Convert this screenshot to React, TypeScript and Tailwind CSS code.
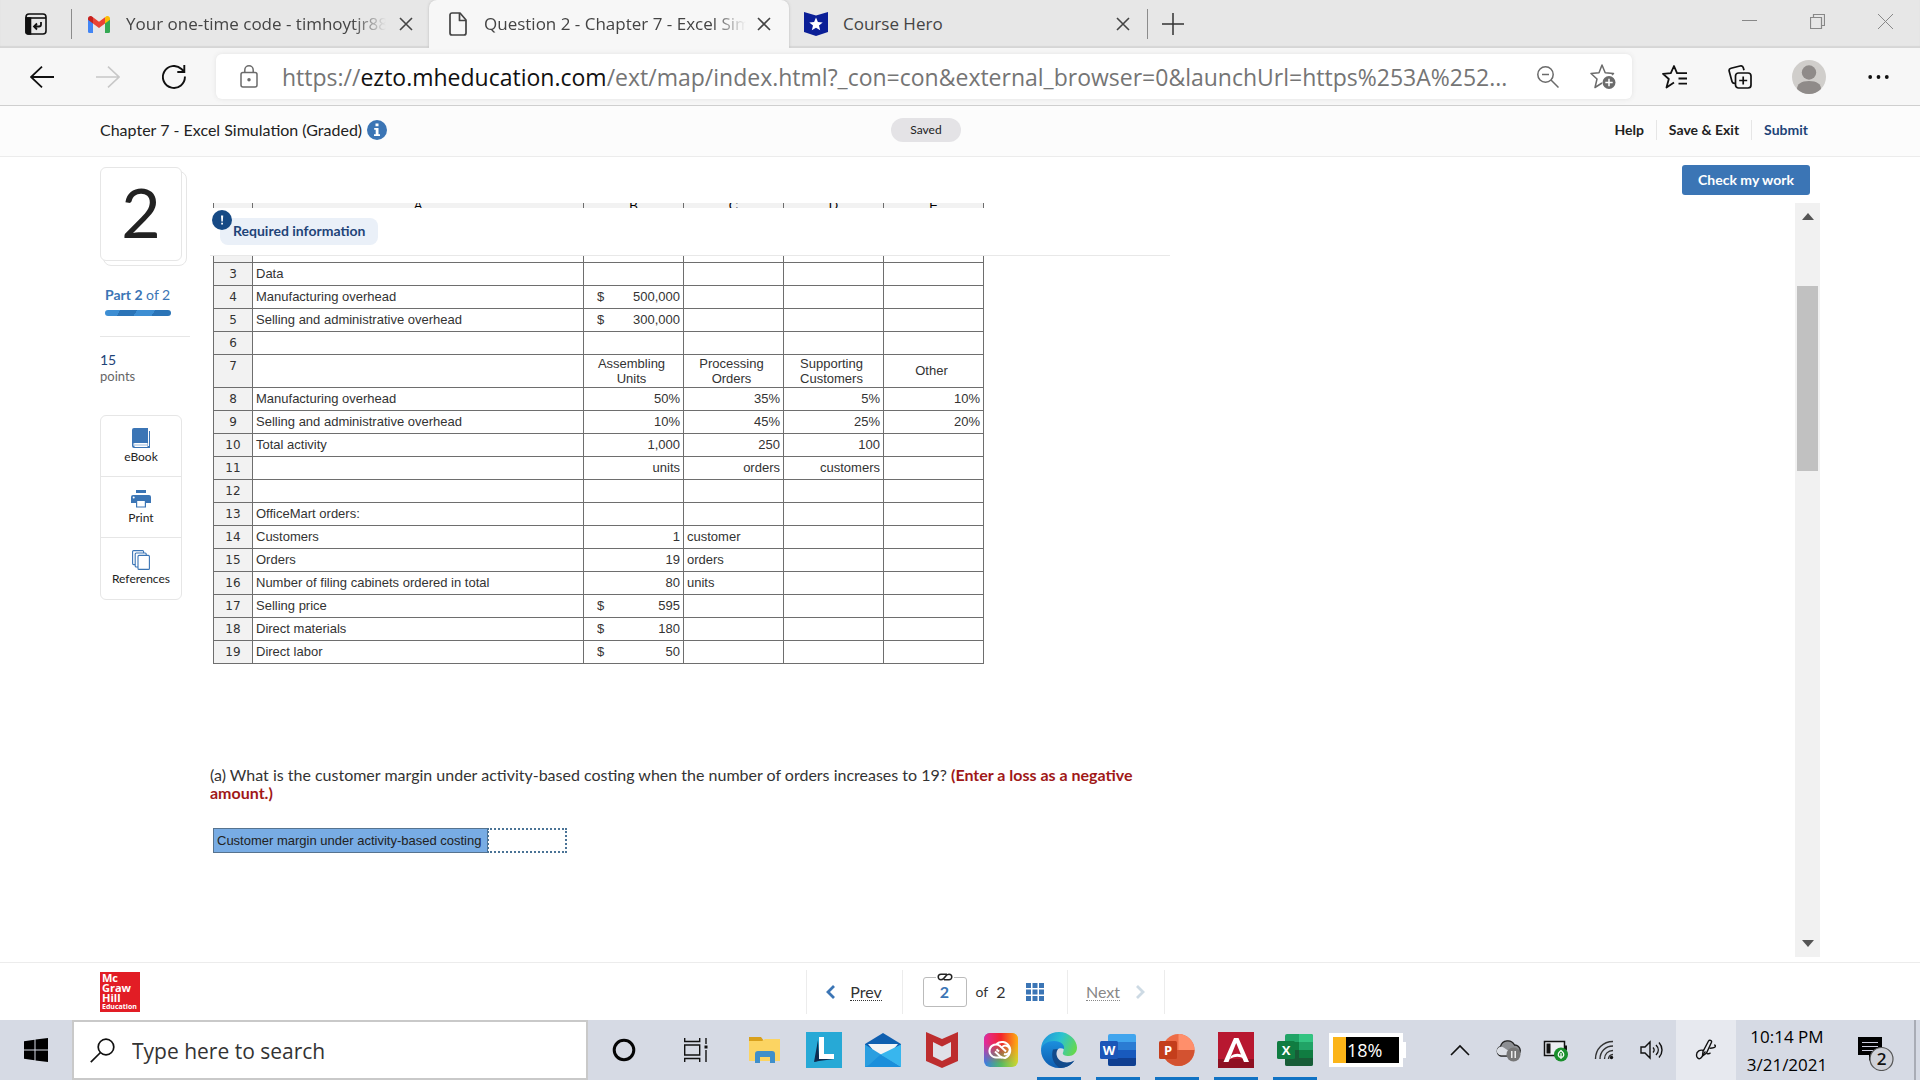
import React from 'react';

type Cell = string;
type Row = { n: number; cells: Cell[]; header?: boolean };

const rows: Row[] = [
  { n: 1, cells: ['', '', '', '', ''] },
  { n: 2, cells: ['', '', '', '', ''] },
  { n: 3, cells: ['Data', '', '', '', ''] },
  { n: 4, cells: ['Manufacturing overhead', '$500,000', '', '', ''] },
  { n: 5, cells: ['Selling and administrative overhead', '$300,000', '', '', ''] },
  { n: 6, cells: ['', '', '', '', ''] },
  { n: 7, cells: ['', 'Assembling Units', 'Processing Orders', 'Supporting Customers', 'Other'], header: true },
  { n: 8, cells: ['Manufacturing overhead', '50%', '35%', '5%', '10%'] },
  { n: 9, cells: ['Selling and administrative overhead', '10%', '45%', '25%', '20%'] },
  { n: 10, cells: ['Total activity', '1,000', '250', '100', ''] },
  { n: 11, cells: ['', 'units', 'orders', 'customers', ''] },
  { n: 12, cells: ['', '', '', '', ''] },
  { n: 13, cells: ['OfficeMart orders:', '', '', '', ''] },
  { n: 14, cells: ['Customers', '1', '<customer', '', ''] },
  { n: 15, cells: ['Orders', '19', '<orders', '', ''] },
  { n: 16, cells: ['Number of filing cabinets ordered in total', '80', '<units', '', ''] },
  { n: 17, cells: ['Selling price', '$595', '', '', ''] },
  { n: 18, cells: ['Direct materials', '$180', '', '', ''] },
  { n: 19, cells: ['Direct labor', '$50', '', '', ''] },
];

const ui = "font-['Open_Sans','Noto_Sans',sans-serif]";
const body = "font-['Lato','Open_Sans',sans-serif]";

function Close({ className = 'size-[14px]' }: { className?: string }) {
  return (
    <svg viewBox="0 0 14 14" className={className} fill="none" stroke="currentColor" strokeWidth="1.6">
      <path d="M1 1l12 12M13 1L1 13" />
    </svg>
  );
}

function TabStrip() {
  return (
    <div className={`flex h-12 shrink-0 items-stretch bg-[#e7e7e7] text-[17px] text-[#444] shadow-[inset_0_-2px_1px_#d6d6d6] ${ui}`}>
      <div className="flex w-[72px] items-center border-r-0 pl-[25px]">
        <button aria-label="Tab actions">
          <svg viewBox="0 0 22 22" className="size-[22px]" fill="none" stroke="#111" strokeWidth="1.6">
            <rect x="1" y="1" width="20" height="20" rx="3" />
            <path d="M1 5h20" />
            <path d="M1 5h4.500v16H3a2 2 0 0 1-2-2z" fill="#111" />
            <path d="M16 9v2.500a2 2 0 0 1-2 2H9.500M12 10.500l-3 3 3 3" strokeWidth="1.800" />
          </svg>
        </button>
      </div>
      <div className="flex w-[357px] items-center">
        <span className="-ml-px h-[30px] w-px bg-[#8c8c8c]" />
        <svg viewBox="0 0 22 17" className="ml-[16px] h-[17px] w-[22px] shrink-0">
          <path d="M0 2.500V15.500A1.500 1.500 0 0 0 1.500 17H5V6z" fill="#4285f4" />
          <path d="M22 2.500V15.500A1.500 1.500 0 0 1 20.500 17H17V6z" fill="#34a853" />
          <path d="M17 1.200V7.500l5-3.700V2.500C22 .4 19.700-.7 18 .5z" fill="#fbbc04" />
          <path d="M5 7.500V1.200l6 4.500 6-4.500v6.300L11 12z" fill="#ea4335" />
          <path d="M0 2.500v1.300l5 3.700V1.200L4 .5C2.300-.7 0 .4 0 2.500z" fill="#c5221f" />
        </svg>
        <span className="ml-4 w-[260px] overflow-hidden whitespace-nowrap [mask-image:linear-gradient(to_right,black_87%,transparent)]">
          Your one-time code - timhoytjr88
        </span>
        <button aria-label="Close tab" className="ml-[13px]"><Close /></button>
      </div>
      <div className="flex w-[360px] items-center rounded-t-lg bg-[#f7f7f7] shadow-[0_0_3px_#bbb] [clip-path:inset(0_-4px_0_-4px)]">
        <svg viewBox="0 0 18 24" className="ml-5 h-6 w-[18px] shrink-0" fill="none" stroke="#444" strokeWidth="1.700" strokeLinejoin="round">
          <path d="M3 1h8l6 7v13a2 2 0 0 1-2 2H3a2 2 0 0 1-2-2V3a2 2 0 0 1 2-2z" />
          <path d="M10.500 1v7.500H17" />
        </svg>
        <span className="ml-[17px] w-[262px] overflow-hidden whitespace-nowrap [mask-image:linear-gradient(to_right,black_87%,transparent)]">
          Question 2 - Chapter 7 - Excel Sim
        </span>
        <button aria-label="Close tab" className="ml-[11px]"><Close /></button>
      </div>
      <div className="flex w-[359px] items-center">
        <svg viewBox="0 0 24 24" className="ml-[15px] size-6 shrink-0">
          <path d="M0 0l12 3.500L24 0v20l-12 4-12-4z" fill="#0b1f97" />
          <path d="M12 5.500l1.900 4.500 4.800.4-3.700 3.100 1.200 4.700-4.200-2.500-4.200 2.500L9 13.500l-3.700-3.100 4.800-.4z" fill="#fff" />
        </svg>
        <span className="ml-[15px] flex-1">Course Hero</span>
        <button aria-label="Close tab" className="mr-[17px]"><Close /></button>
        <span className="h-[30px] w-px bg-[#8c8c8c]" />
      </div>
      <button aria-label="New tab" className="ml-[14px]">
        <svg viewBox="0 0 22 22" className="size-[22px]" stroke="#333" strokeWidth="1.500"><path d="M11 0v22M0 11h22" /></svg>
      </button>
      <div className="ml-auto flex items-start gap-[53px] pt-[14px] pr-[27px] text-[#888]">
        <button aria-label="Minimize">
          <svg viewBox="0 0 15 15" className="size-[15px]" stroke="currentColor"><path d="M0 6.500h15" /></svg>
        </button>
        <button aria-label="Restore">
          <svg viewBox="0 0 15 15" className="size-[15px]" fill="none" stroke="currentColor" strokeWidth="1.200"><path d="M.5 3.500h11v11H.5zM3.500 3.500v-3h11v11h-3" /></svg>
        </button>
        <button aria-label="Close window">
          <svg viewBox="0 0 15 15" className="size-[15px]" fill="none" stroke="currentColor"><path d="M0 0l15 15M15 0L0 15" /></svg>
        </button>
      </div>
    </div>
  );
}

function Toolbar() {
  return (
    <div className={`flex h-[58px] shrink-0 items-center border-b border-[#cfcfcf] bg-[#f7f7f7] pr-[31px] pl-[30px] ${ui}`}>
      <button aria-label="Back">
        <svg viewBox="0 0 24 22" className="h-[22px] w-6" fill="none" stroke="#111" strokeWidth="1.800"><path d="M24 11H1M12 .7L1 11l11 10.300" /></svg>
      </button>
      <button aria-label="Forward" className="ml-[42px]">
        <svg viewBox="0 0 24 22" className="h-[22px] w-6" fill="none" stroke="#c8c8c8" strokeWidth="1.600"><path d="M0 11h23M12 .7L23 11 12 21.300" /></svg>
      </button>
      <button aria-label="Refresh" className="ml-[42px]">
        <svg viewBox="0 0 24 24" className="size-6" fill="none" stroke="#111" strokeWidth="1.900"><path d="M22.900 11.500A11 11 0 1 1 19.500 4L22 6.600M22.300 0v7h-7" /></svg>
      </button>
      <div className="ml-[30px] flex h-[45px] flex-1 items-center rounded-md bg-white pr-4 pl-6 shadow-[0_0_5px_#e2e2e2]">
        <svg viewBox="0 0 18 23" className="h-[23px] w-[18px] shrink-0" fill="none" stroke="#6b6b6b" strokeWidth="1.500">
          <rect x="1" y="7.500" width="16" height="14.500" rx="2" />
          <path d="M4.800 7.500V5a4.200 4.200 0 0 1 8.400 0v2.500" />
          <circle cx="9" cy="14.700" r="1" fill="#6b6b6b" />
        </svg>
        <div role="textbox" aria-label="Address" className="ml-6 flex-1 whitespace-nowrap text-[23px] leading-8 text-[#757575]">
          https://<span className="text-[#111]">ezto.mheducation.com</span>/ext/map/index.html?_con=con&amp;external_browser=0&amp;launchUrl=https%253A%252...
        </div>
        <button aria-label="Zoom out">
          <svg viewBox="0 0 22 22" className="size-[22px]" fill="none" stroke="#6b6b6b" strokeWidth="1.500"><circle cx="8.500" cy="8.500" r="7.700" /><path d="M14 14l7.500 7.500M5 8.500h7" /></svg>
        </button>
        <button aria-label="Add to favorites" className="ml-[31px]">
          <svg viewBox="0 0 26 26" className="size-[26px]" fill="none" stroke="#6b6b6b" strokeWidth="1.500" strokeLinejoin="round">
            <path d="M12 19l-7 4.500 2-8.500L1 9.500l8-.7L12 1l3.200 7.800 8.300.7-1.500 1.500" />
            <circle cx="19" cy="18.500" r="6.500" fill="#6b6b6b" stroke="none" />
            <path d="M19 14.800v7.400M15.300 18.500h7.400" stroke="#fff" />
          </svg>
        </button>
      </div>
      <button aria-label="Favorites" className="ml-[30px]">
        <svg viewBox="0 0 26 24" className="h-6 w-[26px]" fill="none" stroke="#111" strokeWidth="1.800" strokeLinejoin="round">
          <path d="M12 17.500L4.500 22.500l2.300-8.500L1 8.800l7.800-.6L12 1l3 7.200h10M16.500 13.500H25M16.500 18.700H25" />
        </svg>
      </button>
      <button aria-label="Collections" className="ml-10">
        <svg viewBox="0 0 24 24" className="size-6" fill="none" stroke="#111" strokeWidth="1.700">
          <rect x="7.500" y="8" width="15.500" height="15" rx="3" />
          <path d="M15.200 11.500v8M11.200 15.500h8M7 18.200c-1.500.3-2.700-.3-3-1.700L1.200 6.300C.8 4.800 1.600 3.600 3 3.200L12 1c1.600-.4 2.900.3 3.300 1.700L16 5.200" />
        </svg>
      </button>
      <button aria-label="Profile" className="ml-10">
        <svg viewBox="0 0 34 34" className="size-[34px]">
          <defs><clipPath id="avatar"><circle cx="17" cy="17" r="17" /></clipPath></defs>
          <g clipPath="url(#avatar)"><rect width="34" height="34" fill="#d0cecb" /><circle cx="17" cy="12.500" r="7.200" fill="#8f8b89" /><path d="M5 34V29c0-5 4-8 12-8s12 3 12 8v5z" fill="#8f8b89" /></g>
        </svg>
      </button>
      <button aria-label="Settings and more" className="ml-[42px]">
        <svg viewBox="0 0 21 6" className="h-[6px] w-[21px]" fill="#111"><circle cx="2.200" cy="3" r="1.900" /><circle cx="10.500" cy="3" r="1.900" /><circle cx="18.800" cy="3" r="1.900" /></svg>
      </button>
    </div>
  );
}

function AssignmentHeader() {
  return (
    <header className="grid h-[51px] shrink-0 grid-cols-3 items-center border-b border-[#ececec] bg-[#fcfcfc] pr-[112px] pb-[2px] pl-[100px] text-[#222]">
      <h1 className="flex items-center gap-[5px] text-base">
        Chapter 7 - Excel Simulation (Graded)
        <svg viewBox="0 0 20 20" className="size-5"><circle cx="10" cy="10" r="10" fill="#3b75b5" /><path d="M8.500 3.500h3v2.800h-3zM7.200 8h4.300v6.300h1.500V16H7v-1.700h1.700V9.700H7.200z" fill="#fff" /></svg>
      </h1>
      <span className="mr-14 flex h-6 w-[70px] items-center justify-center justify-self-center rounded-xl bg-[#e4e3e6] text-xs">Saved</span>
      <nav className="flex items-center justify-end text-sm leading-5 font-bold">
        <a href="#help" className="pr-3">Help</a>
        <a href="#exit" className="border-l border-[#e6e6e6] px-3">Save &amp; Exit</a>
        <a href="#submit" className="border-l border-[#e6e6e6] pl-3 text-[#1f4478]">Submit</a>
      </nav>
    </header>
  );
}

function Sidebar() {
  return (
    <aside className="w-[110px] shrink-0 pt-[10px] text-[13px]">
      <div className="relative mb-[6px] h-[94px] w-[82px]">
        <div className="absolute top-1 left-[3px] h-[95px] w-[84px] rounded-lg border border-[#e6e6e6]" />
        <div className="relative flex h-full items-center justify-center rounded-md border border-[#e6e6e6] bg-white pb-1 text-[68px] leading-none text-[#222]">2</div>
      </div>
      <p className="mt-[26px] ml-[5px] text-[14px] leading-4 text-[#3b75b5]"><b>Part 2</b> of 2</p>
      <div className="mt-[7px] ml-[5px] h-[6px] w-[66px] rounded-full bg-[linear-gradient(120deg,#3d8ed3_0_22%,#2b74b7_22%_46%,#3d8ed3_46%_72%,#2b74b7_72%)]" />
      <div className="mt-5 w-[90px] border-t border-[#e6e6e6] pt-[14px] leading-[17px]">
        <p className="text-[14px] text-[#1f4478]">15</p>
        <p className="text-[#666]">points</p>
      </div>
      <div className="mt-[30px] w-[82px] divide-y divide-[#e6e6e6] rounded-md border border-[#e6e6e6] text-xs text-[#222]">
        <button className="flex h-[61px] w-full flex-col items-center pt-3 leading-[18px]">
          <svg viewBox="0 0 18 20" className="h-5 w-[18px]"><path d="M2 0h14v15H2.500v4H15.500V3H18v17H2a2 2 0 0 1-2-2V2a2 2 0 0 1 2-2z" fill="#3b75b5" /><path d="M1.500 16.500H15" stroke="#fff" strokeWidth="2.500" /><path d="M2 17h13" stroke="#9dbbdc" strokeWidth="1" /><path d="M16.500 2v16" stroke="#fff" /></svg>
          eBook
        </button>
        <button className="flex h-[61px] w-full flex-col items-center pt-3 leading-[18px]">
          <svg viewBox="0 0 20 20" className="size-5"><path d="M5 1h10v3H5zM2 6h16a2 2 0 0 1 2 2v6H0V8a2 2 0 0 1 2-2z" fill="#3b75b5" /><circle cx="2.700" cy="8.500" r="1" fill="#fff" /><path d="M5.600 11.500h8.800V18H5.600z" fill="#fff" stroke="#3b75b5" strokeWidth="1.200" /></svg>
          Print
        </button>
        <button className="flex h-[61px] w-full flex-col items-center pt-3 leading-[18px]">
          <svg viewBox="0 0 18 20" className="h-5 w-[18px]" fill="#fff" stroke="#3b75b5" strokeWidth="1.100"><rect x=".6" y=".6" width="11" height="14" rx="1" /><rect x="3.200" y="3" width="11" height="14" rx="1" /><rect x="6" y="5.400" width="11.400" height="14" rx="1" /></svg>
          References
        </button>
      </div>
    </aside>
  );
}

function DataCell({ value, first, header }: { value: string; first: boolean; header?: boolean }) {
  const base = 'border border-[#6e6e6e] p-0 pb-[2px] px-[3px]';
  if (header) return <td className="border border-[#6e6e6e] p-0 pr-4 pb-px pl-3 text-center">{value}</td>;
  if (value.startsWith('$'))
    return (
      <td className={base}>
        <span className="flex justify-between pl-[10px]"><span>$</span><span>{value.slice(1)}</span></span>
      </td>
    );
  if (first || value.startsWith('<')) return <td className={base}>{value.replace('<', '')}</td>;
  return <td className={`${base} text-right`}>{value}</td>;
}

function Spreadsheet() {
  return (
    <table className="-mt-[10px] ml-[3px] w-[770px] table-fixed border-collapse font-['Liberation_Sans',Arial,sans-serif] text-[13px] leading-[15px] text-[#333]">
      <colgroup>
        <col className="w-[39px]" /><col className="w-[331px]" /><col className="w-[100px]" /><col className="w-[100px]" /><col className="w-[100px]" /><col className="w-[100px]" />
      </colgroup>
      <thead>
        <tr className="h-[23px] bg-[#f2f2f2]">
          <th className="border border-[#6e6e6e] p-0" />
          {['A', 'B', 'C', 'D', 'E'].map((l) => (
            <th key={l} scope="col" className="border border-[#6e6e6e] p-0 font-normal text-black">{l}</th>
          ))}
        </tr>
      </thead>
      <tbody>
        {rows.map((r) => (
          <tr key={r.n} className={r.header ? 'h-[33px]' : 'h-[23px]'}>
            <th scope="row" className={`border border-[#6e6e6e] bg-[#f2f2f2] p-0 text-center font-['DejaVu_Sans',Verdana,sans-serif] text-xs font-normal ${r.header ? 'pt-[3px] align-top' : 'pb-px'}`}>{r.n}</th>
            {r.cells.map((c, i) => <DataCell key={i} value={c} first={i === 0} header={r.header} />)}
          </tr>
        ))}
      </tbody>
    </table>
  );
}

function Question() {
  return (
    <main className="flex min-h-0 flex-1 bg-white px-[100px]">
      <Sidebar />
      <div className="flex min-w-0 flex-1 flex-col">
        <div className="flex h-[46px] shrink-0 justify-end pt-2 pr-[10px]">
          <button className="h-[30px] w-32 rounded-[3px] bg-[#3b75b5] text-sm font-bold text-white">Check my work</button>
        </div>
        <div className="mb-[5px] flex min-h-0 flex-1">
          <div className="relative min-w-0 flex-1 overflow-hidden">
            <Spreadsheet />
            <div className="absolute top-[5px] left-0 h-12 w-[960px] border-b border-[#e8e8e8] bg-white">
              <h2 className="mt-[10px] ml-[10px] flex h-[27px] w-fit items-center rounded-lg bg-[#eaf0f8] px-[13px] pb-px text-sm font-bold text-[#1f4478]">Required information</h2>
              <svg viewBox="0 0 20 20" className="absolute top-[2px] left-[2px] size-5"><circle cx="10" cy="10" r="10" fill="#174a85" /><path d="M9 5.500h2.200l-.4 6H9.400zM9.200 12.700h1.800v1.800H9.200z" fill="#fff" /></svg>
            </div>
            <p className="mt-[102px] w-[960px] text-base leading-[18px] text-[#333]">
              (a) What is the customer margin under activity-based costing when the number of orders increases to 19?{' '}
              <b className="text-[#a01818]">(Enter a loss as a negative amount.)</b>
            </p>
            <div className="mt-[26px] ml-[3px] flex h-[25px] w-fit font-['Liberation_Sans',Arial,sans-serif] text-[13px] text-[#222]">
              <label htmlFor="margin" className="flex items-center border border-[#56738f] bg-[#78ace4] px-[6px] pl-[3px]">Customer margin under activity-based costing</label>
              <input id="margin" className="-ml-px w-20 border-2 border-dotted border-[#4a7396] px-1 outline-none" />
            </div>
          </div>
          <div className="flex w-[25px] shrink-0 flex-col items-center bg-[#f1f1f1] py-[10px]">
            <svg viewBox="0 0 12 7" className="h-[7px] w-3" fill="#555"><path d="M6 0l6 7H0z" /></svg>
            <div className="mt-[66px] h-[185px] w-[21px] bg-[#c1c1c1]" />
            <svg viewBox="0 0 12 7" className="mt-auto h-[7px] w-3" fill="#555"><path d="M6 7L0 0h12z" /></svg>
          </div>
        </div>
      </div>
    </main>
  );
}

function Footer() {
  return (
    <footer className="grid h-[58px] shrink-0 grid-cols-[1fr_auto_1fr] items-center border-t border-[#ececec] bg-white px-[100px] text-base text-[#333]">
      <div className="mt-px flex size-10 flex-col justify-center bg-[#e21d25] pl-[2px] font-['Open_Sans',sans-serif] text-[11px] leading-[10px] font-bold text-white">
        <span>Mc</span><span>Graw</span><span>Hill</span><span className="text-[7px] leading-[8px]">Education</span>
      </div>
      <nav className="ml-[50px] flex h-11 items-stretch divide-x divide-[#ececec] border-x border-[#ececec]">
        <button className="flex w-[96px] items-center justify-center gap-[15px]">
          <svg viewBox="0 0 9 14" className="h-[14px] w-[9px]" fill="none" stroke="#3b75b5" strokeWidth="2.800"><path d="M8 1L2 7l6 6" /></svg>
          <span className="border-b border-dotted border-[#333] leading-[17px]">Prev</span>
        </button>
        <div className="flex w-[165px] items-center pl-5">
          <div className="relative">
            <input aria-label="Question number" defaultValue="2" className="block h-[30px] w-11 rounded-[3px] border border-[#bbb] text-center font-bold text-[#3b75b5]" />
            <svg viewBox="0 0 18 8" className="absolute -top-1 left-[13px] h-2 w-[18px] bg-white" fill="none" stroke="#222" strokeWidth="1.500"><path d="M11 1.200H5a2.800 2.800 0 0 0 0 5.600c1.800 0 2.800-.8 4-2.800 1.200-2 2.200-2.800 4-2.800a2.800 2.800 0 0 1 0 5.600H8" /></svg>
          </div>
          <span className="ml-[9px] text-sm">of</span><span className="ml-2">2</span>
          <button aria-label="All questions" className="ml-[21px]">
            <svg viewBox="0 0 18 18" className="size-[18px]" fill="#3b75b5"><path d="M0 0h5v5H0zM6.500 0h5v5h-5zM13 0h5v5h-5zM0 6.500h5v5H0zM6.500 6.500h5v5h-5zM13 6.500h5v5h-5zM0 13h5v5H0zM6.500 13h5v5h-5zM13 13h5v5h-5z" /></svg>
          </button>
        </div>
        <button className="flex w-[96px] items-center justify-center gap-4 text-[#888]">
          <span className="border-b border-dotted border-[#888] leading-[17px]">Next</span>
          <svg viewBox="0 0 9 14" className="h-[14px] w-[9px]" fill="none" stroke="#cddae4" strokeWidth="2.800"><path d="M1 1l6 6-6 6" /></svg>
        </button>
      </nav>
    </footer>
  );
}

function OfficeIcon({ letter, tile, children }: { letter: string; tile: string; children: React.ReactNode }) {
  return (
    <svg viewBox="0 0 36 34" className="h-[34px] w-9">
      {children}
      <rect x="0" y="8" width="18" height="18" rx="1.500" fill={tile} />
      <text x="9" y="21.500" textAnchor="middle" fontFamily="Open Sans" fontWeight="700" fontSize="13" fill="#fff">{letter}</text>
    </svg>
  );
}

const apps: { name: string; open?: boolean; icon: React.ReactNode }[] = [
  { name: 'File Explorer', icon: (
    <svg viewBox="0 0 34 28" className="h-7 w-[34px]"><path d="M1 1h12l3 4-3 3H1z" fill="#d9a01c" /><path d="M1 5h13l3-2h15v22H1z" fill="#fcd462" /><path d="M7 27v-9a3 3 0 0 1 3-3h14a3 3 0 0 1 3 3v9h-5v-6H12v6z" fill="#3f8fca" /></svg>) },
  { name: 'Lenovo Vantage', icon: (
    <svg viewBox="0 0 36 36" className="size-9"><path d="M0 0h36v36H0z" fill="#27a9d6" /><path d="M12 8L8 30l5-1.500V24z" fill="#0d2c50" /><path d="M8 30l6-4 14 1-15 2z" fill="#0d2c50" /><path d="M13 5h5v17h10v5H13z" fill="#fff" /></svg>) },
  { name: 'Mail', icon: (
    <svg viewBox="0 0 36 34" className="h-[34px] w-9"><path d="M0 11L18 0l18 11v5H0z" fill="#0f5fb0" /><path d="M3 11h30L22 24h-8z" fill="#f3f4f6" /><path d="M0 11.500L20 24 36 34H0z" fill="#2a9ee0" /><path d="M36 11.500V34L20 24.500 15.500 21.500z" fill="#38b6ee" /><path d="M0 34l4-2 11.500-10.500L36 34z" fill="#1b8fdb" /></svg>) },
  { name: 'McAfee', icon: (
    <svg viewBox="0 0 32 36" className="h-9 w-8"><path d="M0 0l16 7 16-7v29l-16 7-16-7z" fill="#bd2d2e" /><path d="M7 10l9 4.500L25 10v14.500L16 29l-9-4.500z" fill="#dfe0e7" /></svg>) },
  { name: 'Creative Cloud', icon: (
    <svg viewBox="0 0 34 34" className="size-[34px]">
      <defs>
        <linearGradient id="ccTop" x1="0" x2="1"><stop offset="0" stopColor="#e02ba0" /><stop offset=".5" stopColor="#f3252c" /><stop offset="1" stopColor="#ffae12" /></linearGradient>
        <linearGradient id="ccBottom" x1="0" x2="1"><stop offset="0" stopColor="#3a7be8" /><stop offset=".5" stopColor="#56bb63" /><stop offset="1" stopColor="#d2d72e" /></linearGradient>
        <linearGradient id="ccFade" x1="0" y1="0" x2="0" y2="1"><stop offset=".3" stopColor="#fff" /><stop offset=".9" stopColor="#000" /></linearGradient>
        <mask id="ccMask"><rect width="34" height="34" fill="url(#ccFade)" /></mask>
      </defs>
      <rect width="34" height="34" rx="6" fill="url(#ccBottom)" /><rect width="34" height="34" rx="6" fill="url(#ccTop)" mask="url(#ccMask)" />
      <g fill="none" stroke="#fff" strokeWidth="2"><path d="M18 24.500H12a6.500 6.500 0 1 1 4-11.600l6 5.600" /><path d="M15 18.500l-2.500-2.300" /><path d="M12.500 11A8.300 8.300 0 1 1 21 25c-2.200 0-3.800-.7-5.300-2L11 18.500" /><path d="M17.500 15a4.300 4.300 0 1 1 2.500 6" /></g>
    </svg>) },
  { name: 'Microsoft Edge', open: true, icon: (
    <svg viewBox="0 0 36 36" className="size-9">
      <defs>
        <linearGradient id="edgeTop" x1="0" y1=".3" x2="1" y2=".6"><stop offset="0" stopColor="#2195dc" /><stop offset=".5" stopColor="#2cc3cf" /><stop offset="1" stopColor="#66d84e" /></linearGradient>
        <linearGradient id="edgeLow" x1="0" y1="0" x2="0" y2="1"><stop offset="0" stopColor="#1c8fdd" /><stop offset="1" stopColor="#0d5cb0" /></linearGradient>
      </defs>
      <path d="M0 18C0 7 8 0 18 0s18 8 18 15.500C36 21 32 24 28 24c-4.500 0-7-1.500-6-3.500 2-3.500-.5-9-7-9C8 11.500 3 14 0 18z" fill="url(#edgeTop)" />
      <path d="M0 18C1 12 7 9 13 9c7 0 11 4 10 8-5-2-9 1-9 6 0 7 7 10 12 9 3-.6 5-1.500 7-3-3 4.500-8.500 7-15 7C8 36 0 28 0 18z" fill="url(#edgeLow)" />
      <path d="M12 17.500c-2 6-.5 14.500 7 18.500 6 0 11.500-3 14.500-7.500-7 4-17 2-18-6-.2-2 .5-4 1.500-5.500z" fill="#114a8b" />
    </svg>) },
  { name: 'Word', open: true, icon: (
    <OfficeIcon letter="W" tile="#1b56b8"><rect x="8" y="1" width="28" height="32" rx="2" fill="#41a5ee" /><path d="M8 9h28v8H8z" fill="#2b7cd3" /><path d="M8 17h28v8H8z" fill="#185abd" /><path d="M8 25h28v6a2 2 0 0 1-2 2H10a2 2 0 0 1-2-2z" fill="#103f91" /></OfficeIcon>) },
  { name: 'PowerPoint', open: true, icon: (
    <OfficeIcon letter="P" tile="#c43e1c"><circle cx="19.500" cy="17" r="16" fill="#ed6c47" /><path d="M19.500 1a16 16 0 0 1 16 16h-16z" fill="#ff8f6b" /><path d="M3.500 17h32a16 16 0 0 1-32 0z" fill="#d35230" /></OfficeIcon>) },
  { name: 'Access Reader', open: true, icon: (
    <svg viewBox="0 0 36 36" className="size-9"><path d="M0 0h36v36H0z" fill="#b81730" /><path d="M0 27h36v9H0z" fill="#8f1022" /><path d="M5.500 30L16 6h4.500L31 30h-5L18.200 11 10.500 30z" fill="#fff" /><path d="M13 24c4-3 9-3 12 0l1 3c-4-3-9-3-14 0z" fill="#fff" /></svg>) },
  { name: 'Excel', open: true, icon: (
    <OfficeIcon letter="X" tile="#107c41"><rect x="8" y="1" width="28" height="32" rx="2" fill="#21a366" /><path d="M22 1h12a2 2 0 0 1 2 2v6H22z" fill="#33c481" /><path d="M8 9h14v8H8z" fill="#107c41" /><path d="M22 17h14v8H22z" fill="#107c41" /><path d="M8 17h14v8H8z" fill="#185c37" /><path d="M8 25h28v6a2 2 0 0 1-2 2H10a2 2 0 0 1-2-2z" fill="#185c37" /></OfficeIcon>) },
];

function Tray() {
  const cell = 'flex w-12 items-center justify-center';
  return (
    <div className="ml-auto flex items-stretch text-black">
      <button aria-label="Show hidden icons" className={cell}>
        <svg viewBox="0 0 20 12" className="h-3 w-5" fill="none" stroke="#111" strokeWidth="1.600"><path d="M1 11l9-9 9 9" /></svg>
      </button>
      <button aria-label="OneDrive" className={cell}>
        <svg viewBox="0 0 26 24" className="h-6 w-[26px]"><path d="M6 18a5 5 0 0 1-.5-9.500A7.500 7.500 0 0 1 19.500 7 5.500 5.500 0 0 1 20 18z" fill="#8d8f93" stroke="#222" strokeWidth="1.300" /><path d="M6 17.300a4.300 4.300 0 1 1 3-7.500L20 17.300z" fill="#dcdfe5" /><circle cx="18.500" cy="16.500" r="7" fill="#777" /><path d="M16.800 13v7M20.200 13v7" stroke="#fff" strokeWidth="1.300" /></svg>
      </button>
      <button aria-label="Power" className={cell}>
        <svg viewBox="0 0 26 24" className="h-6 w-[26px]"><path d="M1.500 3.500h20v14h-20z" fill="#eceef3" stroke="#111" strokeWidth="1.500" /><path d="M3.500 5.500h4v10h-4zM22 7.500h2v5h-2z" fill="#111" /><circle cx="18" cy="16.500" r="7" fill="#1a8f2c" /><path d="M18 12.500c-5 4 -2 7 0 7s5-3 0-7zM18 15v6" fill="none" stroke="#fff" strokeWidth="1.200" /></svg>
      </button>
      <button aria-label="Network" className={cell}>
        <svg viewBox="0 0 20 20" className="size-5" fill="none" stroke="#333" strokeWidth="1.400"><path d="M1.500 19C1.500 9 9 1.500 19 1.500M6 19C6 11.500 11.500 6 19 6M10.500 19c0-5 3.500-8.500 8.500-8.500M14.500 19c0-2.500 2-4.500 4.500-4.500" /><circle cx="17.500" cy="17.500" r="1.700" fill="#111" stroke="none" /></svg>
      </button>
      <button aria-label="Volume" className={cell}>
        <svg viewBox="0 0 24 20" className="h-5 w-6" fill="none" stroke="#111" strokeWidth="1.400"><path d="M1 7h4l5-5v16l-5-5H1zM13 7.500c1.500 1.500 1.500 3.500 0 5M16 5c3 3 3 7 0 10M19 2.500c4 4.500 4 10.500 0 15" /></svg>
      </button>
      <button aria-label="Windows Ink Workspace" className="flex w-[60px] items-center justify-center bg-[#e7e9ef]">
        <svg viewBox="0 0 22 22" className="size-[22px]" fill="none" stroke="#111" strokeWidth="1.400"><path d="M7.500 17l.5-4.500L13.500 2c1-1.600 3.600-.6 3 1.300L11.500 14z" /><path d="M9 11.500c-4-1.300-7.500.8-7.500 4.500 0 2.600 2 4.300 3.800 3.400C8 18 7.800 15 10.500 12.500M14.500 9.500c1.800-1.200 4 .2 5.500-1.500.8-1 .2-2-.8-2M12 14.500c1.200.6 2.400.3 3.500-.8" /></svg>
      </button>
      <button className="w-[102px] pt-[2px] text-center text-[17px] leading-7"><span className="block">10:14 PM</span><span className="block">3/21/2021</span></button>
      <button aria-label="Notifications" className="w-[76px] pl-5">
        <svg viewBox="0 0 37 36" className="mt-[6px] h-9 w-[37px]"><path d="M0 2h24v18h-8l-5 6v-6H0z" fill="#000" /><path d="M4 7.500h16M4 11.500h16M4 15.500h11" stroke="#ccd" strokeWidth="1.200" /><circle cx="23.500" cy="24" r="11.500" fill="#cfd1d8" stroke="#555" strokeWidth="1.200" /><text x="23.500" y="30" textAnchor="middle" fontFamily="Open Sans" fontWeight="600" fontSize="17" fill="#111">2</text></svg>
      </button>
      <button aria-label="Show desktop" className="w-[6px] border-l-2 border-[#a9acb5]" />
    </div>
  );
}

function Taskbar() {
  return (
    <div className={`flex h-[60px] shrink-0 items-stretch bg-[#d6dae4] ${ui}`}>
      <button aria-label="Start" className="flex w-[72px] items-center justify-center">
        <svg viewBox="0 0 24 24" className="size-6" fill="#000"><path d="M0 3.300L10.500 1.800v9.700H0zM11.500 1.600L24 0v11.500H11.500zM0 12.500h10.500v9.700L0 20.700zM11.500 12.500H24V24l-12.500-1.600z" /></svg>
      </button>
      <label className="flex w-[516px] items-center gap-[17px] border-2 border-[#c9c9c9] bg-white pl-4">
        <svg viewBox="0 0 25 25" className="size-[25px] shrink-0" fill="none" stroke="#111" strokeWidth="1.700"><circle cx="16" cy="9" r="7.800" /><path d="M10.500 14.500L.8 24.200" /></svg>
        <input aria-label="Search" placeholder="Type here to search" className="min-w-0 flex-1 pt-1 text-[21px] outline-none placeholder:text-[#333]" />
      </label>
      <button aria-label="Cortana" className="flex w-[72px] items-center justify-center">
        <svg viewBox="0 0 24 24" className="size-6" fill="none" stroke="#050505" strokeWidth="3"><circle cx="12" cy="12" r="9.800" /></svg>
      </button>
      <button aria-label="Task view" className="flex w-[72px] items-center justify-center">
        <svg viewBox="0 0 24 24" className="size-6" fill="none" stroke="#111" strokeWidth="1.400"><path d="M.7 0v3.500h15V0M.7 24v-3.500h15V24M.7 7h15v10H.7zM22 0v6M22 12v12" /><path d="M20.500 7.500h3v3h-3z" fill="#111" stroke="none" /></svg>
      </button>
      <div className="ml-1 flex w-[588px]">
        {apps.map((a) => (
          <button key={a.name} aria-label={a.name} className="flex flex-1 flex-col items-center">
            <span className="flex flex-1 items-center pt-[3px]">{a.icon}</span>
            <span className={a.open ? 'h-[3px] w-11 bg-[#1173c4]' : 'h-[3px] w-11'} />
          </button>
        ))}
      </div>
      <div className="ml-[5px] flex items-center">
        <div className="flex h-[34px] w-[74px] items-center border-4 border-white bg-[linear-gradient(to_right,#fbb418_20%,#000_20%)] pl-[14px] text-[18px] leading-none text-white">18%</div>
        <span className="h-4 w-[3px] bg-white" />
      </div>
      <Tray />
    </div>
  );
}

export default function App() {
  return (
    <div className={`flex h-screen flex-col overflow-hidden bg-white ${body}`}>
      <TabStrip />
      <Toolbar />
      <AssignmentHeader />
      <Question />
      <Footer />
      <Taskbar />
    </div>
  );
}
